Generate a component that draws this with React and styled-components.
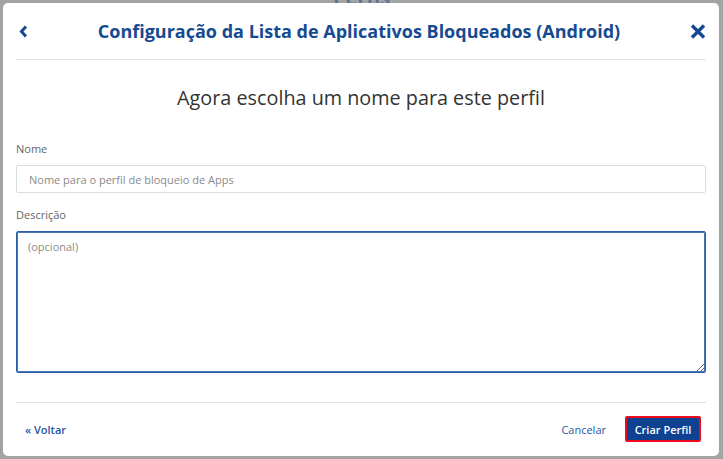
import React from "react";
import styled, { createGlobalStyle } from "styled-components";

const Global = createGlobalStyle`
  html, body { margin: 0; padding: 0; }
  body {
    background: #a3a3a3;
    font-family: "Open Sans", "Liberation Sans", sans-serif;
    width: 723px;
    height: 459px;
    overflow: hidden;
  }
`;

const Backdrop = styled.div`
  position: relative;
  width: 723px;
  height: 459px;
  box-sizing: border-box;
  padding: 3px 4px 3px 3px;
`;

const BehindTitle = styled.div`
  position: absolute;
  top: -12px;
  left: 0;
  right: 0;
  text-align: center;
  font-size: 20px;
  line-height: 20px;
  font-weight: 700;
  color: #5f7597;
`;

const Modal = styled.div`
  position: relative;
  width: 716px;
  height: 453px;
  box-sizing: border-box;
  background: #fff;
  border-radius: 5px;
  padding: 0 13px;
  display: flex;
  flex-direction: column;
`;

const Header = styled.div`
  height: 56px;
  border-bottom: 1px solid #e3e3e3;
  display: flex;
  align-items: center;
  justify-content: space-between;
`;

const IconButton = styled.button`
  background: none;
  border: none;
  padding: 0;
  margin: ${(p) => p.$margin || "0"};
  display: flex;
  align-items: center;
  cursor: pointer;
  color: #144a93;
`;

const Title = styled.h1`
  margin: 0;
  font-size: 18px;
  font-weight: 700;
  color: #164a91;
  letter-spacing: 0;
`;

const Subtitle = styled.h2`
  margin: 24px 0 0;
  text-align: center;
  font-size: 19.8px;
  line-height: 28px;
  font-weight: 400;
  color: #333;
`;

const Label = styled.label`
  display: block;
  margin-top: ${(p) => p.$top}px;
  font-size: 11px;
  line-height: 16px;
  color: #666;
`;

const Input = styled.input`
  display: block;
  box-sizing: border-box;
  margin-top: 8px;
  width: 100%;
  height: 28px;
  border: 1px solid #d9dde3;
  border-radius: 2px;
  padding: 0 12px;
  font-family: inherit;
  font-size: 11px;
  color: #333;
  outline: none;
  &::placeholder { color: #8a8a8a; }
`;

const TextArea = styled.textarea`
  display: block;
  box-sizing: border-box;
  margin-top: 8px;
  width: 100%;
  height: 142px;
  border: 1px solid #2b5ea9;
  box-shadow: 0 0 0 1px #4a76b8 inset;
  border-radius: 2px;
  padding: 7px 11px;
  font-family: inherit;
  font-size: 11px;
  color: #333;
  outline: none;
  resize: vertical;
  &::placeholder { color: #8a8a8a; }
`;

const Footer = styled.div`
  margin-top: 29px;
  border-top: 1px solid #e0e0e6;
  height: 52px;
  display: flex;
  align-items: center;
  justify-content: space-between;
  padding: 0 5px 0 9px;
`;

const LinkButton = styled.button`
  background: none;
  border: none;
  padding: 0;
  font-family: inherit;
  font-size: 11px;
  font-weight: ${(p) => (p.$bold ? 600 : 400)};
  color: #1f56a5;
  cursor: pointer;
`;

const Actions = styled.div`
  display: flex;
  align-items: center;
  gap: 19px;
`;

const PrimaryButton = styled.button`
  box-sizing: border-box;
  height: 26px;
  width: 76px;
  background: #0e4190;
  border: 2px solid #ee0a1e;
  border-radius: 2px;
  color: #fff;
  font-family: inherit;
  font-size: 11px;
  font-weight: 600;
  cursor: pointer;
  padding: 0;
`;

export default function App() {
  return (
    <>
      <Global />
      <Backdrop>
        <BehindTitle>Perfis</BehindTitle>
        <Modal>
          <Header>
            <IconButton $margin="0 0 0 3px" aria-label="Voltar">
              <svg width="9" height="13" viewBox="0 0 9 13">
                <polyline points="7,1.5 2.5,6.5 7,11.5" fill="none" stroke="currentColor" strokeWidth="3" strokeLinejoin="miter" />
              </svg>
            </IconButton>
            <Title>Configuração da Lista de Aplicativos Bloqueados (Android)</Title>
            <IconButton aria-label="Fechar">
              <svg width="16" height="15" viewBox="0 0 16 15">
                <path d="M2 1.5 L14 13.5 M14 1.5 L2 13.5" stroke="currentColor" strokeWidth="3.4" strokeLinecap="butt" />
              </svg>
            </IconButton>
          </Header>
          <Subtitle>Agora escolha um nome para este perfil</Subtitle>
          <Label $top={29}>Nome</Label>
          <Input placeholder="Nome para o perfil de bloqueio de Apps" />
          <Label $top={14}>Descrição</Label>
          <TextArea placeholder="(opcional)" />
          <Footer>
            <LinkButton $bold>« Voltar</LinkButton>
            <Actions>
              <LinkButton>Cancelar</LinkButton>
              <PrimaryButton>Criar Perfil</PrimaryButton>
            </Actions>
          </Footer>
        </Modal>
      </Backdrop>
    </>
  );
}
